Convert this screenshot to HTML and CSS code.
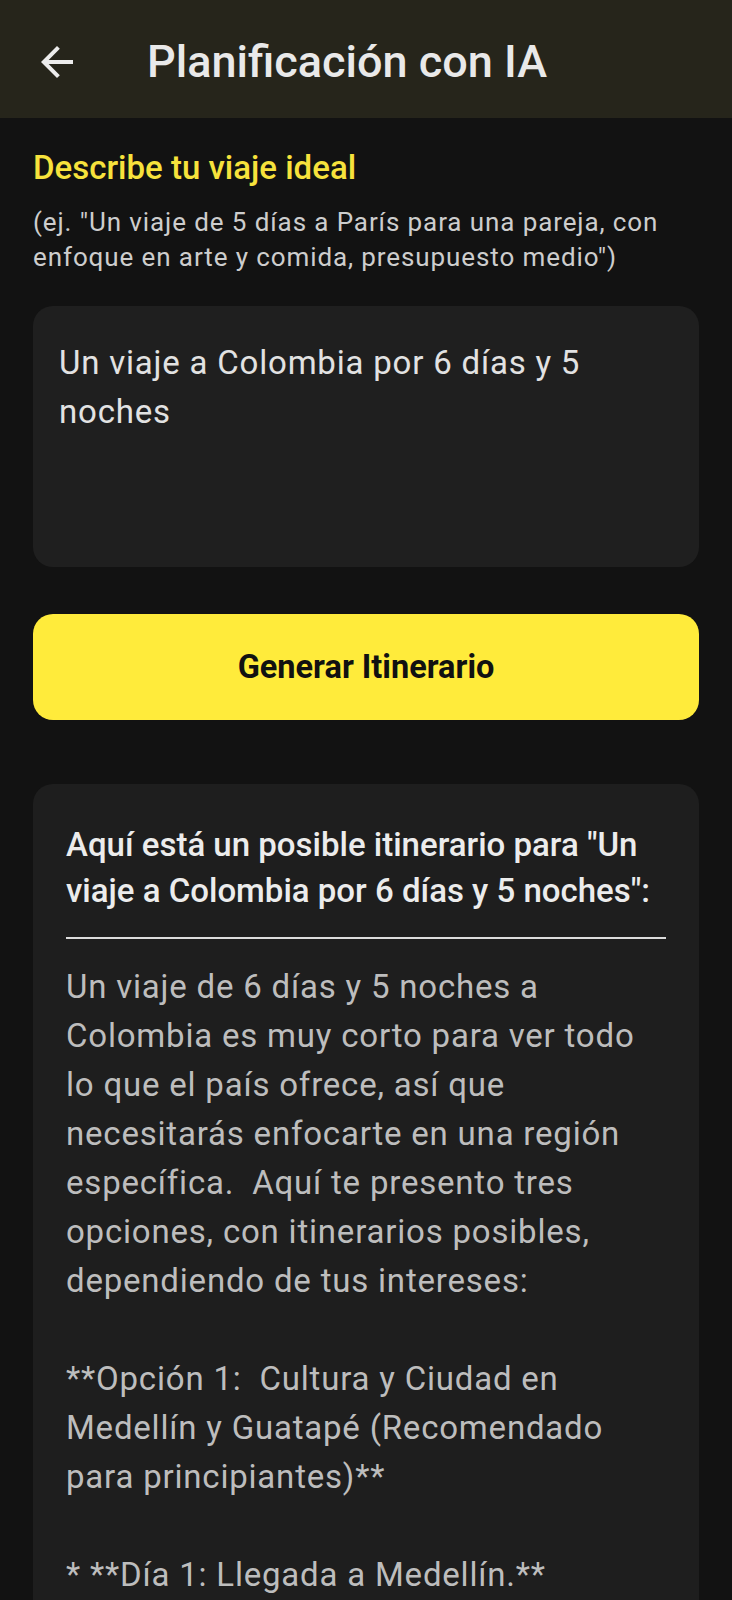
FILE: index.html
```html
<!DOCTYPE html>
<html lang="es">
<head>
<meta charset="utf-8">
<title>Planificación con IA</title>
<link rel="stylesheet" href="styles.css">
</head>
<body>
<header class="appbar">
  <svg class="back" width="32" height="32" viewBox="4 4 16 16" aria-hidden="true">
    <path d="M20 11H7.83l5.59-5.59L12 4l-8 8 8 8 1.41-1.41L7.83 13H20v-2z" fill="#ececec"/>
  </svg>
  <h1 class="title">Planificación con IA</h1>
</header>
<main class="content">
  <h2 class="label">Describe tu viaje ideal</h2>
  <p class="hint">(ej. "Un viaje de 5 días a París para una pareja, con enfoque en arte y comida, presupuesto medio")</p>
  <div class="field">Un viaje a Colombia por 6 días y 5 noches</div>
  <button class="generate">Generar Itinerario</button>
  <section class="card">
    <h3 class="card-title">Aquí está un posible itinerario para "Un viaje a Colombia por 6 días y 5 noches":</h3>
    <hr class="divider">
    <p class="body">Un viaje de 6 días y 5 noches a Colombia es muy corto para ver todo lo que el país ofrece, así que necesitarás enfocarte en una región específica.&nbsp; Aquí te presento tres opciones, con itinerarios posibles, dependiendo de tus intereses:</p>
    <p class="body">**Opción 1:&nbsp; Cultura y Ciudad en Medellín y Guatapé (Recomendado para principiantes)**</p>
    <p class="body">* **Día 1: Llegada a Medellín.**</p>
  </section>
</main>
</body>
</html>
```

FILE: styles.css
```css
html, body {
  margin: 0;
  padding: 0;
}
html {
  height: 1600px;
  overflow: hidden;
}
body {
  background: #121212;
  font-family: Roboto, "Noto Sans", sans-serif;
  width: 732px;
  height: 1600px;
  overflow: hidden;
}
.appbar {
  height: 118px;
  background: #26251b;
  display: flex;
  align-items: center;
  padding-left: 41px;
  box-sizing: border-box;
}
.back {
  flex: none;
  margin-top: 6px;
}
.title {
  margin: 0 0 0 74px;
  font-size: 45px;
  font-weight: 500;
  color: #e9e9e9;
  letter-spacing: 0;
  padding-top: 4px;
}
.content {
  padding: 32px 33px 0 33px;
}
.label {
  margin: 0;
  font-size: 33px;
  font-weight: 500;
  color: #f7e23c;
  line-height: 36px;
}
.hint {
  margin: 19px 0 0 0;
  font-size: 26px;
  line-height: 35px;
  letter-spacing: 0.9px;
  color: #cdcdcd;
}
.field {
  margin-top: 31px;
  height: 261px;
  background: #1f1f1f;
  border-radius: 20px;
  box-sizing: border-box;
  padding: 32px 26px;
  font-size: 33px;
  line-height: 49px;
  letter-spacing: 0.8px;
  color: #e2e2e2;
}
.generate {
  display: block;
  width: 100%;
  margin-top: 47px;
  height: 106px;
  border: none;
  border-radius: 20px;
  background: #ffeb3b;
  color: #111;
  font-family: Roboto, "Noto Sans", sans-serif;
  font-size: 32.5px;
  font-weight: 700;
}
.card {
  margin-top: 64px;
  background: #1e1e1e;
  border-radius: 20px;
  padding: 38px 33px 40px 33px;
}
.card-title {
  margin: 0;
  font-size: 33px;
  font-weight: 500;
  line-height: 46px;
  color: #ececec;
}
.divider {
  margin: 23px 0 23px 0;
  border: none;
  height: 2px;
  background: #dcdcdc;
}
.body {
  margin: 0 0 49px 0;
  font-size: 33px;
  line-height: 49px;
  letter-spacing: 0.8px;
  color: #bdbdbd;
}
```
